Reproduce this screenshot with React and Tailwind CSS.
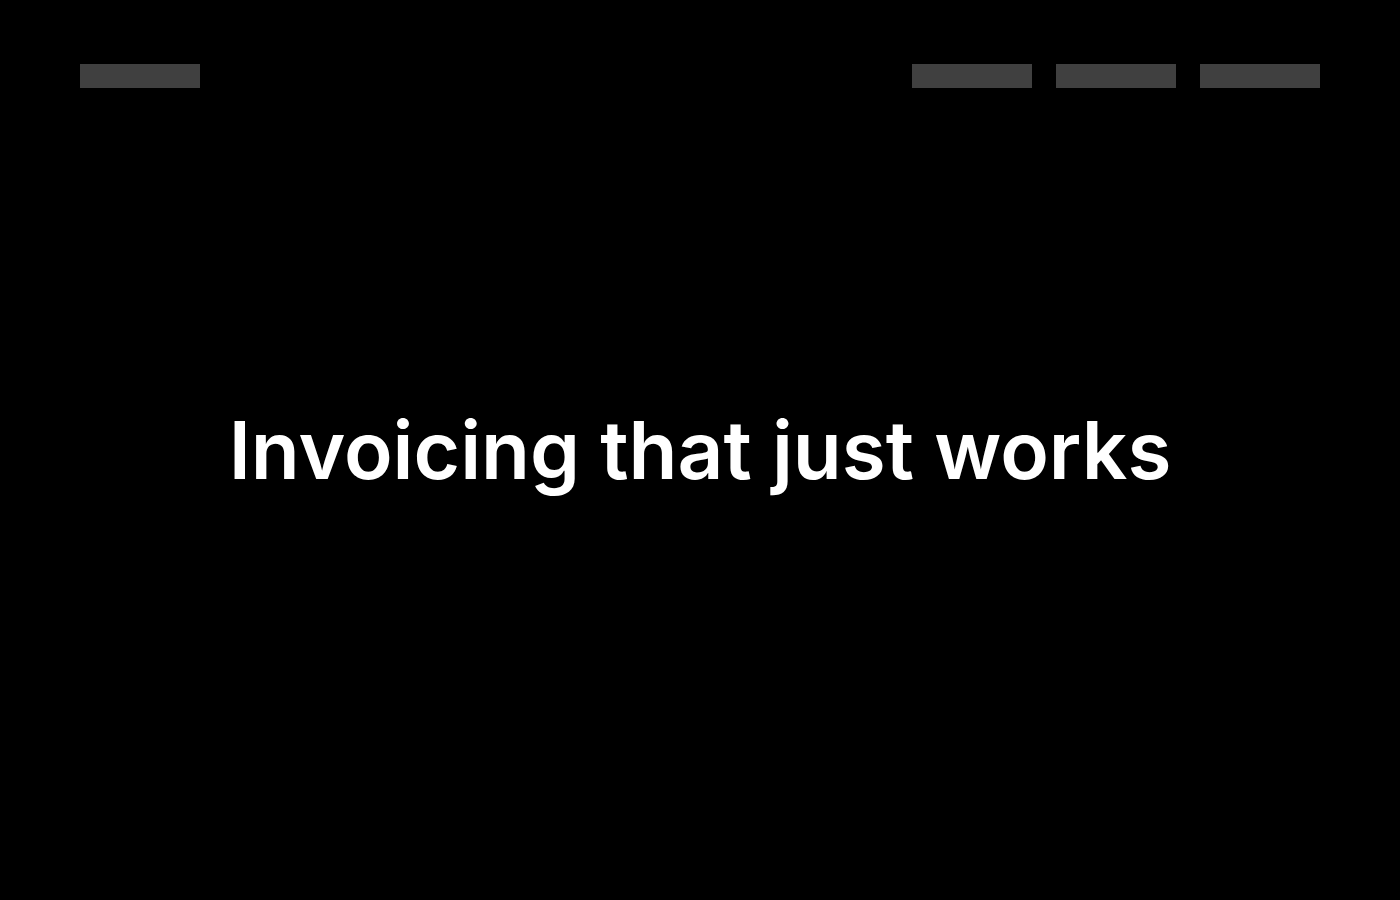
export default function App() {
  return (
    <div className="flex h-screen flex-col bg-black" style={{ fontFamily: 'Inter, "Noto Sans", sans-serif' }}>
      <header className="flex h-[88px] items-start justify-between px-20 pt-16">
        <div className="h-6 w-[120px] bg-[#404040]" />
        <nav className="flex gap-6">
          <div className="h-6 w-[120px] bg-[#404040]" />
          <div className="h-6 w-[120px] bg-[#404040]" />
          <div className="h-6 w-[120px] bg-[#404040]" />
        </nav>
      </header>
      <main className="flex flex-1 items-center justify-center">
        <h1 className="text-[80px] font-semibold leading-none text-white">Invoicing that just works</h1>
      </main>
      <div className="h-[88px]" />
    </div>
  )
}
